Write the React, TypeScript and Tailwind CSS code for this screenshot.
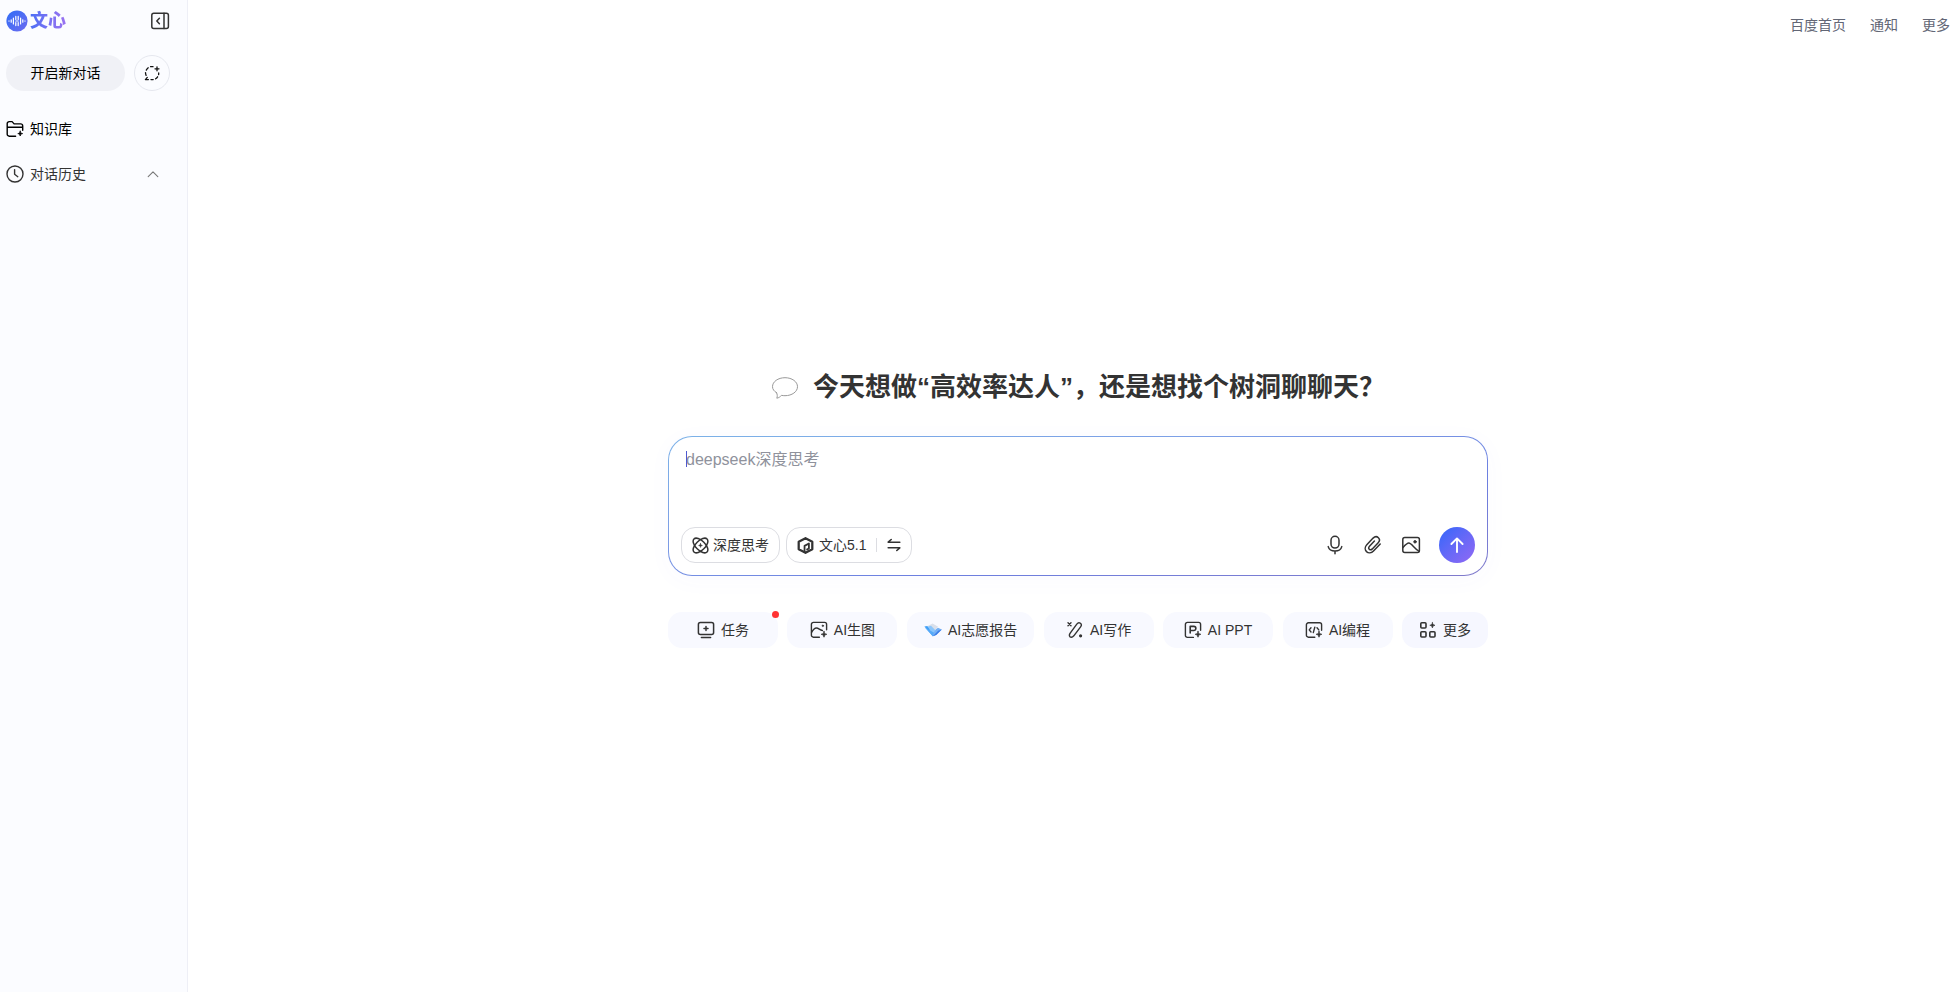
import React, { useState } from 'react';

type IconProps = { className?: string };

const stroke = {
  fill: 'none',
  stroke: 'currentColor',
  strokeWidth: 1.5,
  strokeLinecap: 'round' as const,
  strokeLinejoin: 'round' as const,
};

function LogoMark() {
  return (
    <svg viewBox="0 0 22 22" className="size-[22px]" aria-hidden="true">
      <defs>
        <linearGradient id="mark" x1="0" y1="0" x2="1" y2="1">
          <stop offset="0" stopColor="#2f6df6" />
          <stop offset="1" stopColor="#6f6cf0" />
        </linearGradient>
      </defs>
      <circle cx="11" cy="11" r="10.6" fill="url(#mark)" />
      <g stroke="#fff" strokeWidth="1.2" strokeLinecap="round" fill="none">
        <path d="M2.8 11h.4M5.2 9.800v2.400M7.400 8v6M9.800 6.400v3M9.800 12.600v3M12.200 6.400v3M12.200 12.600v3M14.600 8v6M16.800 9.800v2.400M18.800 11h.4" />
        <path d="M9.800 11h2.400" />
      </g>
    </svg>
  );
}

function CollapseIcon() {
  return (
    <svg viewBox="0 0 20 20" className="size-5" {...stroke} aria-hidden="true">
      <rect x="1.8" y="2.2" width="16.6" height="15.4" rx="2" />
      <path d="M14 2.2v15.4M9.4 7.2 6.8 10l2.6 2.8" />
    </svg>
  );
}

function TempChatIcon() {
  return (
    <svg viewBox="0 0 18 18" className="size-[18px]" {...stroke} strokeWidth={1.3} aria-hidden="true">
      <path d="M10 2.6A6.6 6.6 0 0 0 7.6 2.7M5.2 3.8a6.5 6.5 0 0 0-1.9 2.3M2.5 8.6a6.5 6.5 0 0 0 .6 2.800M4.3 13.4 2.4 15.6h3M8 15.6h2.2M12.6 14.8a6.5 6.5 0 0 0 2-2M15.6 10.6c.1-.5.1-1 .1-1.6" />
      <path d="M14 2.8v4M12 4.800h4" />
    </svg>
  );
}

function FolderIcon() {
  return (
    <svg viewBox="0 0 18 18" className="size-[18px]" {...stroke} strokeWidth={1.4} aria-hidden="true">
      <path d="M9.6 16.2H3.2a2 2 0 0 1-2-2V3.6a2 2 0 0 1 2-2h2.9l2 2.3h6.6a2 2 0 0 1 2 2v4.3M1.2 7.2h15.5" />
      <path d="M14.2 11.2c.3 1.6.8 2.1 2.4 2.4-1.6.3-2.1.8-2.4 2.4-.3-1.6-.8-2.1-2.4-2.4 1.6-.3 2.1-.8 2.4-2.4Z" fill="currentColor" strokeWidth=".8" />
    </svg>
  );
}

function ClockIcon() {
  return (
    <svg viewBox="0 0 18 18" className="size-[18px]" {...stroke} strokeWidth={1.4} aria-hidden="true">
      <circle cx="9" cy="9" r="8" />
      <path d="M8.6 4.6v4.7l3.2 2.4" />
    </svg>
  );
}

function ChevronIcon({ className = '' }: IconProps) {
  return (
    <svg viewBox="0 0 12 12" className={`size-3 ${className}`} {...stroke} strokeWidth={1.1} aria-hidden="true">
      <path d="M1.2 8.6 6 3.8l4.8 4.8" />
    </svg>
  );
}

function BubbleIcon() {
  return (
    <svg viewBox="0 0 28 24" className="h-6 w-7" {...stroke} strokeWidth={1} aria-hidden="true">
      <path d="M5.6 16.800C3 15.200 1.500 13.100 1.500 10.700 1.500 5.700 7 1.700 14 1.700s12.500 4 12.500 9S21 19.700 14 19.700c-1.200 0-2.400-.1-3.500-.4-1.200 1.500-2.700 2.500-4.700 2.900.7-1.800.7-3.600-.2-5.400Z" />
    </svg>
  );
}

function AtomIcon() {
  return (
    <svg viewBox="0 0 18 18" className="size-[17px]" {...stroke} strokeWidth={1.6} aria-hidden="true">
      <ellipse cx="9" cy="9" rx="9.800" ry="5" transform="rotate(45 9 9)" />
      <ellipse cx="9" cy="9" rx="9.800" ry="5" transform="rotate(-45 9 9)" />
      <path d="M9 7c.2 1.300.7 1.800 2 2-1.300.2-1.800.7-2 2-.2-1.300-.7-1.800-2-2 1.300-.2 1.800-.7 2-2Z" fill="currentColor" strokeWidth=".6" />
    </svg>
  );
}

function ModelIcon() {
  return (
    <svg viewBox="0 0 18 18" className="size-[17px]" fill="none" stroke="currentColor" strokeWidth="2.4" strokeLinejoin="round" aria-hidden="true">
      <path d="M9 1.200 16.200 5.100v7.800L9 16.800l-7.200-3.900V5.100Z" />
      <path d="M8 16.400V9.400L12.600 6.800v5.400L10 13.600" strokeWidth="1.900" />
    </svg>
  );
}

function SwapIcon() {
  return (
    <svg viewBox="0 0 14 14" className="size-[14px]" {...stroke} strokeWidth={1.6} aria-hidden="true">
      <path d="M12.800 4.200H1.200L4.200 1.500M1.200 9.800h11.600l-3 2.700" />
    </svg>
  );
}

function MicIcon() {
  return (
    <svg viewBox="0 0 20 20" className="size-5" {...stroke} aria-hidden="true">
      <rect x="6" y="1.300" width="8" height="11.800" rx="4" />
      <path d="M3.200 11.600c.8 2.900 3.400 4.400 6.800 4.400s6-1.500 6.800-4.400M10 16v2.800" />
    </svg>
  );
}

function ClipIcon() {
  return (
    <svg viewBox="0 0 20 20" className="size-5" {...stroke} aria-hidden="true">
      <path d="m17.200 9-6.700 7c-2.100 2.200-5.100 2.400-7 .6-1.800-1.800-1.700-4.700.3-6.800l6.300-6.700c1.600-1.600 3.900-1.700 5.300-.4 1.400 1.400 1.300 3.500-.2 5l-5.900 6.200c-1 1-2.200 1.100-3 .3s-.7-2 .2-3l4.900-5.200" />
    </svg>
  );
}

function ImageIcon() {
  return (
    <svg viewBox="0 0 20 20" className="size-5" {...stroke} aria-hidden="true">
      <rect x="1.800" y="2.400" width="16.600" height="15.200" rx="2" />
      <path d="M2 12.400c2.200-2.400 4.200-4.400 5.800-4.400 2.800 0 5.600 5.800 10.400 8.400" />
      <circle cx="14" cy="6.800" r="1.300" fill="currentColor" strokeWidth=".8" />
    </svg>
  );
}

function ArrowUpIcon() {
  return (
    <svg viewBox="0 0 18 18" className="size-[18px]" {...stroke} strokeWidth={1.9} aria-hidden="true">
      <path d="M9 16V2.400M3.400 8 9 2.400 14.600 8" />
    </svg>
  );
}

const spark = 'M14 10.400c.4 1.900.9 2.500 2.800 2.900-1.900.4-2.400 1-2.800 2.900-.4-1.900-.9-2.500-2.800-2.900 1.900-.4 2.400-1 2.800-2.900Z';

function TaskIcon() {
  return (
    <svg viewBox="0 0 18 18" className="size-[18px]" {...stroke} aria-hidden="true">
      <rect x="1.400" y="1.600" width="15.200" height="12" rx="2" />
      <path d="M4.400 16.400h9.200M9 5.600v4M7 7.600h4" />
    </svg>
  );
}

function DrawIcon() {
  return (
    <svg viewBox="0 0 18 18" className="size-[18px]" {...stroke} strokeWidth={1.4} aria-hidden="true">
      <path d="M9.400 16.200H3.400a2 2 0 0 1-2-2V3.400a2 2 0 0 1 2-2h11.200a2 2 0 0 1 2 2v5.400" />
      <path d="M1.600 11.400C3.100 8.600 4.600 7 6.400 7c2.400 0 3.300 2.300 6 2.500" />
      <circle cx="12.800" cy="4.800" r=".8" fill="currentColor" strokeWidth=".6" />
      <path d={spark} fill="currentColor" strokeWidth=".8" />
    </svg>
  );
}

function ReportIcon() {
  return (
    <svg viewBox="0 0 18 18" className="size-[18px]" aria-hidden="true">
      <path d="M3.600 5 8.600 2.400l5.600 3.400-4.600 4.400Z" fill="#d9dfea" />
      <path d="M.4 5.600 3.200 5l6.400 6-.8 4.200Z" fill="#3f9ff7" />
      <path d="m4 5.600 3-.8 4.600 4.600-.2 4.600-2.600 1.200Z" fill="#8cc6fb" />
      <path d="M.8 6.400 8.800 15.200l3-2.600-3-1.600Z" fill="#56aaf8" />
      <path d="m11.800 8.200 2.200-1.400 3.800 1.800-5.200 5.200-3.800 1.400 1.200-4Z" fill="#74b0f5" />
      <path d="m12.200 14 5.600-5.400-3.600 1.200-5.400 5.400Z" fill="#3a7de8" />
    </svg>
  );
}

function WriteIcon() {
  return (
    <svg viewBox="0 0 18 18" className="size-[18px]" {...stroke} strokeWidth={1.4} aria-hidden="true">
      <path d="M4 15.900c-.9-1-.7-2.400.2-3.700l6.600-9.100c1-1.300 2.500-1.600 3.600-.8 1.100.9 1.200 2.300.2 3.600l-6.800 8.900c-1 1.200-2.600 1.800-3.800 1.100Z" />
      <path d="m2 1.800 3 3M5 1.800l-3 3" />
      <circle cx="14.600" cy="14.800" r=".9" fill="currentColor" />
    </svg>
  );
}

function SlidesIcon() {
  return (
    <svg viewBox="0 0 18 18" className="size-[18px]" {...stroke} strokeWidth={1.4} aria-hidden="true">
      <path d="M9.400 16.400H3.400a2 2 0 0 1-2-2V3.400a2 2 0 0 1 2-2h11.200a2 2 0 0 1 2 2v5.800" />
      <path d="M6.200 12V5.400h3.600a2 2 0 0 1 0 4.100H6.400" strokeWidth="1.600" />
      <path d={spark} fill="currentColor" strokeWidth=".8" />
    </svg>
  );
}

function CodeIcon() {
  return (
    <svg viewBox="0 0 18 18" className="size-[18px]" {...stroke} strokeWidth={1.4} aria-hidden="true">
      <path d="M9.800 16.200H3.400a2 2 0 0 1-2-2V3.800a2 2 0 0 1 2-2h11.200a2 2 0 0 1 2 2v5.400" />
      <path d="M6 6.800 4.200 8.900 6 11M12 6.800l1.800 2.100M9.800 6.200l-1.500 5.400" />
      <path d={spark} fill="currentColor" strokeWidth=".8" />
    </svg>
  );
}

function GridIcon() {
  return (
    <svg viewBox="0 0 18 18" className="size-[18px]" {...stroke} strokeWidth={1.6} aria-hidden="true">
      <rect x="1.800" y="1.800" width="5.200" height="5.200" rx="1" />
      <rect x="1.800" y="10.800" width="5.200" height="5.200" rx="1" />
      <rect x="10.800" y="10.800" width="5.200" height="5.200" rx="1" />
      <path d="M13.400 1.600c.4 1.800.9 2.300 2.600 2.700-1.700.4-2.200.9-2.600 2.700-.4-1.800-.9-2.300-2.600-2.700 1.700-.4 2.200-.9 2.600-2.700Z" fill="currentColor" strokeWidth=".6" />
    </svg>
  );
}

const tools = [
  { label: '任务', icon: <TaskIcon />, badge: true },
  { label: 'AI生图', icon: <DrawIcon /> },
  { label: 'AI志愿报告', icon: <ReportIcon /> },
  { label: 'AI写作', icon: <WriteIcon /> },
  { label: 'AI PPT', icon: <SlidesIcon /> },
  { label: 'AI编程', icon: <CodeIcon /> },
];

function Sidebar() {
  const [historyOpen, setHistoryOpen] = useState(true);

  return (
    <aside className="w-[188px] shrink-0 border-r border-[#eeeff6] bg-[#fbfcff] pt-[10px] pr-[17px] pl-[6px]">
      <div className="flex h-[22px] items-center justify-between">
        <a href="#" className="flex items-center gap-[2px]">
          <LogoMark />
          <span className="bg-gradient-to-r from-[#4a6ef5] to-[#9a72f0] bg-clip-text text-[18px] leading-[22px] font-black text-transparent">
            文心
          </span>
        </a>
        <button aria-label="收起侧边栏" className="text-[#333]">
          <CollapseIcon />
        </button>
      </div>

      <div className="mt-[23px] flex items-center gap-[9px]">
        <button className="h-9 flex-1 rounded-full bg-[#f0f1f6] text-black">开启新对话</button>
        <button
          aria-label="临时对话"
          className="flex size-9 items-center justify-center rounded-full border border-[#e6e8ef] text-[#111]"
        >
          <TempChatIcon />
        </button>
      </div>

      <a href="#" className="mt-5 flex h-9 items-center gap-[6px] text-black">
        <FolderIcon />
        知识库
      </a>
      <button
        onClick={() => setHistoryOpen(!historyOpen)}
        className="mt-[9px] flex h-9 w-full items-center gap-[6px] pr-[11px] text-[#333]"
      >
        <ClockIcon />
        对话历史
        <ChevronIcon className={historyOpen ? 'ml-auto text-[#777]' : 'ml-auto rotate-180 text-[#777]'} />
      </button>
    </aside>
  );
}

function Composer() {
  const [text, setText] = useState('');

  return (
    <form
      onSubmit={(e) => e.preventDefault()}
      className="rounded-[24px] bg-[linear-gradient(170deg,#7cb2e8_0%,#7d9ee6_35%,#6c7fe0_65%,#807acb_100%)] p-px shadow-[0_4px_24px_rgba(80,100,240,0.03)]"
    >
      <div className="rounded-[23px] bg-white p-3">
        <div className="relative px-[5px] pt-px">
          {text === '' && <span className="absolute top-[2px] left-[5px] h-4 w-px bg-[#4e5ad0]" />}
          <textarea
            aria-label="输入框"
            value={text}
            onChange={(e) => setText(e.target.value)}
            placeholder="deepseek深度思考"
            className="block h-[77px] w-full resize-none text-base leading-5 text-[#222] outline-none placeholder:text-[#8f929c]"
          />
        </div>
        <div className="flex items-center text-[#333]">
          <button type="button" className="flex h-9 items-center gap-1 rounded-[14px] border border-[#dcdde2] px-[10px]">
            <AtomIcon />
            深度思考
          </button>
          <button type="button" className="ml-[6px] flex h-9 items-center rounded-[14px] border border-[#dcdde2] px-[10px]">
            <ModelIcon />
            <span className="ml-[5px]">文心5.1</span>
            <span className="mx-[10px] h-[14px] w-px bg-[#dcdde2]" />
            <SwapIcon />
          </button>
          <div className="ml-auto flex items-center gap-[18px]">
            <button type="button" aria-label="语音输入">
              <MicIcon />
            </button>
            <button type="button" aria-label="上传文件">
              <ClipIcon />
            </button>
            <button type="button" aria-label="上传图片">
              <ImageIcon />
            </button>
            <button
              type="submit"
              aria-label="发送"
              className="flex size-9 items-center justify-center rounded-full bg-gradient-to-br from-[#2a66fa] to-[#9068f4] text-white"
            >
              <ArrowUpIcon />
            </button>
          </div>
        </div>
      </div>
    </form>
  );
}

function App() {
  return (
    <div className="flex min-h-screen bg-white font-['Liberation_Sans','Noto_Sans_CJK_SC',sans-serif] text-sm" lang="zh-CN">
      <Sidebar />

      <div className="flex flex-1 flex-col">
        <nav className="flex justify-end gap-6 px-[9px] py-[15px] text-[#626675]">
          <a href="#">百度首页</a>
          <a href="#">通知</a>
          <a href="#">更多</a>
        </nav>

        <main className="flex flex-1 flex-col items-center justify-center pb-6 pl-[9px]">
          <h1 className="mb-[30px] flex h-9 items-center gap-[14px] text-[26px] font-bold text-[#333]">
            <span className="text-[#999]">
              <BubbleIcon />
            </span>
            今天想做“高效率达人”，还是想找个树洞聊聊天？
          </h1>

          <div className="w-full max-w-[820px]">
            <Composer />

            {/* Tool shortcuts */}
            <div className="mt-9 flex justify-between">
              {tools.map((tool) => (
                <button
                  key={tool.label}
                  className="relative flex h-9 min-w-[110px] items-center justify-center gap-[6px] rounded-[14px] bg-[#f8f9ff] px-[17px] text-[#333]"
                >
                  {tool.icon}
                  {tool.label}
                  {tool.badge && <span className="absolute -top-px -right-px size-[7px] rounded-full bg-[#f33]" />}
                </button>
              ))}
              <button className="flex h-9 items-center justify-center gap-[6px] rounded-[14px] bg-[#f6f7ff] px-[17px] text-[#333]">
                <GridIcon />
                更多
              </button>
            </div>
          </div>
        </main>
      </div>
    </div>
  );
}

export default App;
